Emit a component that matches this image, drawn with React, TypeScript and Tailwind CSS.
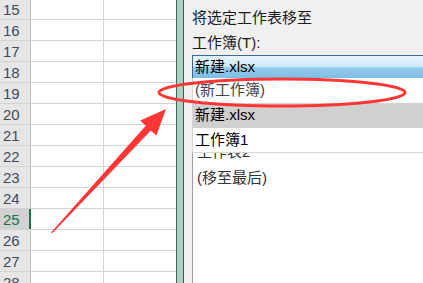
const rows = [15, 16, 17, 18, 19, 20, 21, 22, 23, 24, 25, 26, 27, 28];

function SheetRow({ n }: { n: number }) {
  const active = n === 25;
  return (
    <div className="flex h-[21px] shrink-0 border-b border-[#d4d4d4]">
      <div
        className={
          active
            ? 'flex w-[31px] items-center border-r-2 border-[#217346] bg-[#d2d2d2] pl-[3px] text-[#217346]'
            : 'flex w-[31px] items-center border-r border-[#bdbdbd] bg-[#e6e6e6] pl-[3px] text-[#3f4a59]'
        }
      >
        {n}
      </div>
      <div className="w-[73px] border-r border-[#d4d4d4] bg-white" />
      <div className="flex-1 bg-white" />
    </div>
  );
}

function Overlay() {
  return (
    <svg className="pointer-events-none absolute inset-0" width={423} height={283} viewBox="0 0 423 283">
      <ellipse cx={282} cy={92.5} rx={123} ry={13.5} fill="none" stroke="#ff3636" strokeWidth={3} />
      <polygon
        points="51,232.5 145.7,125.7 140.2,120.6 166,109 156.4,135.6 150.9,130.5 52.5,233"
        fill="#ff3636"
      />
    </svg>
  );
}

export default function App() {
  return (
    <div className="relative flex h-[283px] w-[423px] overflow-hidden bg-white font-['Liberation_Sans','Noto_Sans_CJK_SC',sans-serif] text-[15px]">
      {/* spreadsheet */}
      <div className="-mt-[1px] flex w-[176px] shrink-0 flex-col leading-none">
        {rows.map((n) => (
          <SheetRow key={n} n={n} />
        ))}
      </div>

      {/* splitter */}
      <div className="w-px shrink-0 bg-[#4b5e57]" />
      <div className="w-[6px] shrink-0 bg-[#a8d4c6]" />
      <div className="w-px shrink-0 bg-[#40574e]" />

      {/* move sheet dialog */}
      <div className="relative flex flex-1 flex-col bg-[#f0f0f0] pl-[8px] text-[#1a1a1a]">
        <div className="mt-[8px] leading-[20px]">将选定工作表移至</div>
        <div className="mt-[5px] leading-[20px]">工作簿(T):</div>
        <div className="mt-[2px] flex h-[23px] shrink-0 items-center border-l border-t border-[#3d6a94] bg-[linear-gradient(to_bottom,#e6f3fc_0%,#d2eaf9_45%,#96cbec_55%,#7dbde5_100%)] pl-[2px] text-black">
          新建.xlsx
        </div>
        <div className="flex flex-1 flex-col border-l border-[#a0a0a0] bg-white pl-[4px] pt-[61px] text-[#333]">
          <div className="flex h-[26px] items-center">工作表2</div>
          <div className="flex h-[26px] items-center">(移至最后)</div>
        </div>

        {/* open dropdown list */}
        <div className="absolute left-[8px] right-0 top-[78px] flex flex-col border-b border-l border-[#d6d6d6] bg-white">
          <div className="flex h-[25px] items-center pl-[2px] text-[#444]">(新工作簿)</div>
          <div className="flex h-[25px] items-center bg-[#d0d0d0] pl-[2px] text-black">新建.xlsx</div>
          <div className="flex h-[24px] items-center pl-[2px] text-black">工作簿1</div>
        </div>
      </div>

      <Overlay />
    </div>
  );
}
